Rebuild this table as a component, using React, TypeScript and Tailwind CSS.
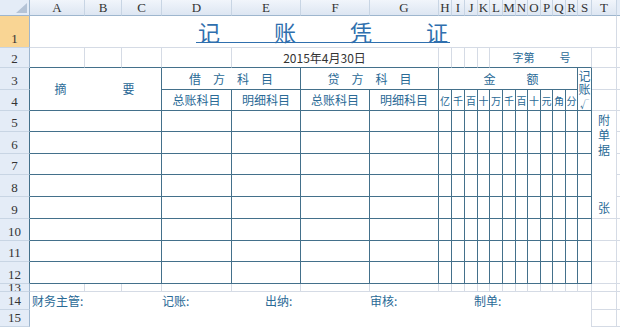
import React from "react";

const letters = ["A", "B", "C", "D", "E", "F", "G", "H", "I", "J", "K", "L", "M", "N", "O", "P", "Q", "R", "S", "T"];
const money = ["亿", "千", "百", "十", "万", "千", "百", "十", "元", "角", "分"];

// cell borders: sheet gridline, voucher ruling, and gridline cell sitting on top of the ruling
const thin = "border-r border-b border-[#d5dbe5]";
const rule = "border-r border-b border-[#43708b]";
const edge = "border-r border-b border-r-[#d5dbe5] border-b-[#43708b]";

function RowHead({ n, active, ruled, squeezed }: { n: number; active?: boolean; ruled?: boolean; squeezed?: boolean }) {
  return (
    <div
      className={`flex justify-center overflow-hidden border-r border-b border-b-[#c8d5e4] font-['Liberation_Serif',serif] text-[13px] text-[#333] ${
        squeezed ? "items-start leading-[7px]" : "items-end pb-[2px] leading-[13px]"
      } ${active ? "bg-[#f9d594]" : "bg-[#e4ecf7]"} ${ruled ? "border-r-[#43708b]" : "border-r-[#9eb6ce]"}`}
    >
      {n}
    </div>
  );
}

export default function App() {
  const body: React.ReactNode[] = [];

  // rows 5-12: empty voucher lines
  for (let r = 5; r <= 12; r++) {
    body.push(<RowHead key={`h${r}`} n={r} ruled />);
    body.push(<div key={`abc${r}`} className={`col-span-3 ${rule}`} />);
    ["D", "E", "F", "G"].forEach((c) => body.push(<div key={`${c}${r}`} className={rule} />));
    money.forEach((_, i) => body.push(<div key={`m${r}-${i}`} className={rule} />));
    body.push(<div key={`s${r}`} className={rule} />);
    if (r === 5) {
      body.push(
        <div
          key="t5"
          className={`row-span-5 flex flex-col items-center justify-between pt-[1px] pb-[3px] text-[12px] leading-[15px] text-[#2a6a96] ${thin}`}
        >
          <div className="flex flex-col items-center">
            <span>附</span>
            <span>单</span>
            <span>据</span>
          </div>
          <span>张</span>
        </div>
      );
    }
    if (r >= 10) body.push(<div key={`t${r}`} className={thin} />);
    body.push(<div key={`u${r}`} className="border-b border-[#d5dbe5]" />);
  }

  return (
    <div className="h-[327px] w-[620px] overflow-hidden bg-white font-['Noto_Sans_CJK_SC',sans-serif]">
      <div className="grid grid-cols-[30px_55px_37px_40px_70px_69px_69px_69px_13px_13px_13px_12px_13px_13px_12px_13px_12px_13px_12px_14px_25px_3px] grid-rows-[16px_32px_20px_22px_21px_21px_22px_21px_22px_22px_22px_21px_22px_8px_18px_17px]">
        {/* column headers */}
        <div className="relative border-r border-b border-r-[#9eb6ce] border-b-[#9eb6ce] bg-[#e4ecf7]">
          <svg className="absolute right-[2px] bottom-[2px]" width="11" height="10" viewBox="0 0 11 10">
            <polygon points="11,0 11,10 0,10" fill="#b4c3d6" />
          </svg>
        </div>
        {letters.map((l) => (
          <div
            key={l}
            className="flex items-center justify-center overflow-hidden border-r border-b border-r-[#c8d5e4] border-b-[#9eb6ce] bg-linear-to-b from-[#f1f5fb] to-[#dde6f2] font-['Liberation_Serif',serif] text-[13px] leading-[13px] text-[#333]"
          >
            {l}
          </div>
        ))}
        <div className="border-b border-[#9eb6ce] bg-[#e4ecf7]" />

        {/* row 1: title */}
        <RowHead n={1} active />
        <div className={`col-span-20 flex items-end justify-center pb-[4px] ${thin}`}>
          <div className="flex gap-[54px] border-b border-[#2f6fae] px-[2px] text-[22px] leading-[22px] text-[#2f6fae]">
            <span>记</span>
            <span>账</span>
            <span>凭</span>
            <span>证</span>
          </div>
        </div>
        <div className="border-b border-[#d5dbe5]" />

        {/* row 2: date and number */}
        <RowHead n={2} />
        <div className={edge} />
        <div className={edge} />
        <div className={edge} />
        <div className={edge} />
        <div className={`col-span-3 flex items-center justify-center pr-[21px] text-[12px] text-[#333] ${edge}`}>
          2015年4月30日
        </div>
        <div className={edge} />
        <div className={edge} />
        <div className={edge} />
        <div className={edge} />
        <div className={`col-span-8 flex items-center justify-center gap-[25px] pl-[2px] text-[11px] text-[#2a6a96] ${edge}`}>
          <span>字第</span>
          <span>号</span>
        </div>
        <div className={thin} />
        <div className="border-b border-[#d5dbe5]" />

        {/* rows 3-4: column titles */}
        <RowHead n={3} ruled />
        <div className={`col-span-3 row-span-2 flex items-center justify-center gap-[56px] pr-[2px] text-[12px] text-[#2a6a96] ${rule}`}>
          <span>摘</span>
          <span>要</span>
        </div>
        <div className={`col-span-2 flex items-center justify-center gap-[12px] text-[12px] text-[#2a6a96] ${rule}`}>
          <span>借</span>
          <span>方</span>
          <span>科</span>
          <span>目</span>
        </div>
        <div className={`col-span-2 flex items-center justify-center gap-[12px] text-[12px] text-[#2a6a96] ${rule}`}>
          <span>贷</span>
          <span>方</span>
          <span>科</span>
          <span>目</span>
        </div>
        <div className={`col-span-11 flex items-center justify-center gap-[31px] pl-[6px] text-[12px] text-[#2a6a96] ${rule}`}>
          <span>金</span>
          <span>额</span>
        </div>
        <div className={`row-span-2 flex flex-col items-center pt-[1px] text-[12px] text-[#2a6a96] ${rule}`}>
          <span className="h-[13px] leading-[13px]">记</span>
          <span className="h-[13px] leading-[13px]">账</span>
          <span className="mt-[5px] h-[9px] text-[9px] leading-[9px]">√</span>
        </div>
        <div className={thin} />
        <div className="border-b border-[#d5dbe5]" />

        <RowHead n={4} ruled />
        {["总账科目", "明细科目", "总账科目", "明细科目"].map((t, i) => (
          <div key={`sub${i}`} className={`flex items-center justify-center text-[12px] text-[#2a6a96] ${rule}`}>
            {t}
          </div>
        ))}
        {money.map((m, i) => (
          <div
            key={`unit${i}`}
            className={`flex items-center justify-center overflow-hidden text-[10px] text-[#2a6a96] ${rule}`}
          >
            {m}
          </div>
        ))}
        <div className={thin} />
        <div className="border-b border-[#d5dbe5]" />

        {body}

        {/* row 13: thin spacer row */}
        <RowHead n={13} squeezed />
        {letters.map((l) => (
          <div key={`r13${l}`} className={thin} />
        ))}
        <div className="border-b border-[#d5dbe5]" />

        {/* rows 14-15: signatures */}
        <RowHead n={14} />
        <div className="col-span-19 row-span-2 border-r border-[#d5dbe5] bg-white">
          <div className="flex h-[18px] items-center pl-[2px] text-[12px] leading-[12px] text-[#2a6a96]">
            <span className="w-[130px]">财务主管:</span>
            <span className="w-[103px]">记账:</span>
            <span className="w-[105px]">出纳:</span>
            <span className="w-[104px]">审核:</span>
            <span>制单:</span>
          </div>
        </div>
        <div className={thin} />
        <div className="border-b border-[#d5dbe5]" />

        <RowHead n={15} />
        <div className={thin} />
        <div className="border-b border-[#d5dbe5]" />
      </div>
    </div>
  );
}
